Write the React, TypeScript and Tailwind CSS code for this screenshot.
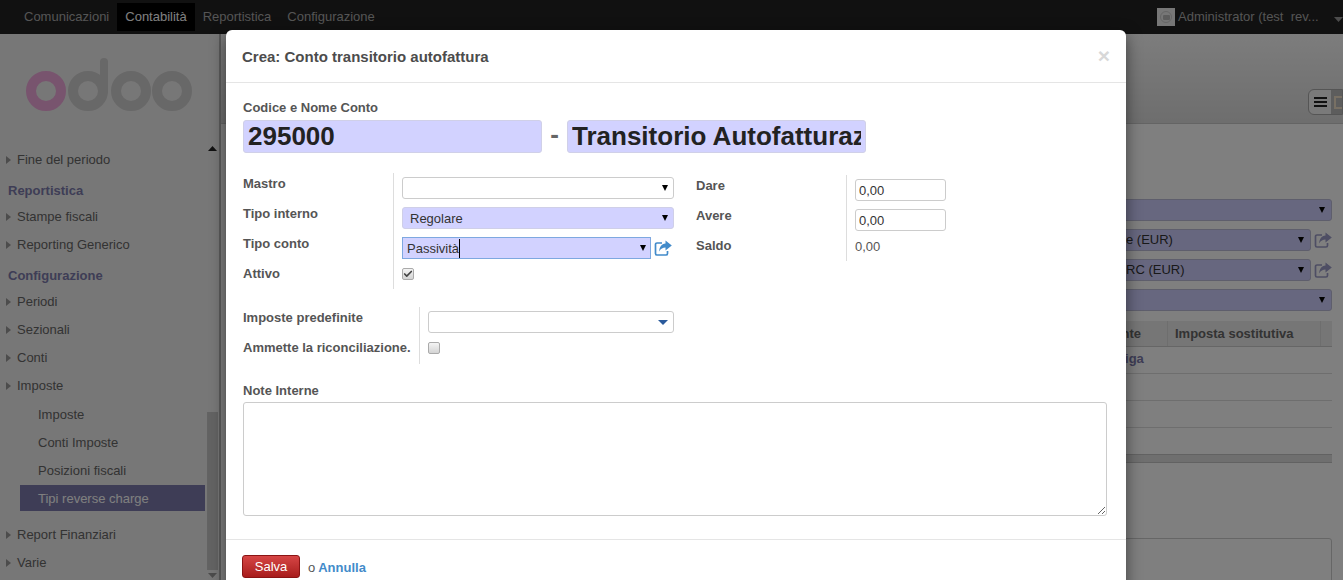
import React from 'react'
import { Check } from 'lucide-react'

const SANS = "font-['Liberation_Sans',Arial,sans-serif]"

const Arrow = ({ color = '#000', wide = false }: { color?: string; wide?: boolean }) =>
  wide ? (
    <svg width="10" height="5" viewBox="0 0 10 5" className="mt-[1px] shrink-0">
      <polygon points="0,0 10,0 5,5" fill={color} />
    </svg>
  ) : (
    <svg width="6" height="6" viewBox="0 0 6 6" className="shrink-0">
      <polygon points="0,0 6,0 3,6" fill={color} />
    </svg>
  )

// share-square icon, the package versions have an outlined arrow
const ShareIcon = ({ color }: { color: string }) => (
  <svg width="18" height="16" viewBox="0 0 18 16" className="shrink-0">
    <path d="M8 3H3a1.5 1.5 0 0 0-1.5 1.5v9A1.5 1.5 0 0 0 3 15h9a1.5 1.5 0 0 0 1.5-1.5V11" fill="none" stroke={color} strokeWidth="1.7" />
    <path d="M11.5 0.5L17.8 5.5L11.5 10.5V7.6C8.8 7.6 6.8 8.6 5.2 11.6C5.2 7 7.6 3.6 11.5 3.4Z" fill={color} />
  </svg>
)

const SideItem = ({ label }: { label: string }) => (
  <div className="flex h-7 items-center pl-[6px] text-[13px] text-[#666]">
    <svg width="5" height="8" viewBox="0 0 5 8" className="mr-[6px] shrink-0">
      <polygon points="0,0 5,4 0,8" fill="#999" />
    </svg>
    {label}
  </div>
)

const SubItem = ({ label, active = false }: { label: string; active?: boolean }) => (
  <div
    className={
      active
        ? 'ml-5 flex h-[26px] items-center bg-[#7c7bad] pl-[18px] pt-px text-[13px] text-white'
        : 'ml-5 flex h-7 items-center pl-[18px] text-[13px] text-[#666]'
    }
  >
    {label}
  </div>
)

const Heading = ({ label }: { label: string }) => (
  <div className="flex h-[29px] items-end pb-[3px] pl-2 text-[13px] font-bold text-[#7c7bad]">{label}</div>
)

const Sidebar = () => (
  <aside className="flex w-[221px] shrink-0 border-r-2 border-[#b4b4b4] bg-[#efeeee]">
    <div className="w-[205px] shrink-0">
      <div className="h-[112px] pl-[25px] pt-[23px]">
        <svg width="170" height="56" viewBox="0 0 170 56" fill="none" strokeWidth="10">
          <circle cx="21" cy="34" r="15" stroke="#f0a8dc" />
          <circle cx="63" cy="34" r="15" stroke="#d0d0d0" />
          <path d="M79 34V5" stroke="#d0d0d0" strokeWidth="8" strokeLinecap="round" />
          <circle cx="106" cy="34" r="15" stroke="#d0d0d0" />
          <circle cx="147" cy="34" r="15" stroke="#d0d0d0" />
        </svg>
      </div>
      <SideItem label="Fine del periodo" />
      <Heading label="Reportistica" />
      <SideItem label="Stampe fiscali" />
      <SideItem label="Reporting Generico" />
      <Heading label="Configurazione" />
      <SideItem label="Periodi" />
      <SideItem label="Sezionali" />
      <SideItem label="Conti" />
      <SideItem label="Imposte" />
      <div className="pt-px">
        <SubItem label="Imposte" />
        <SubItem label="Conti Imposte" />
        <SubItem label="Posizioni fiscali" />
        <SubItem label="Tipi reverse charge" active />
      </div>
      <div className="pt-[10px]">
        <SideItem label="Report Finanziari" />
        <SideItem label="Varie" />
      </div>
    </div>
    <div className="relative w-[14px]">
      <svg width="9" height="5" viewBox="0 0 9 5" className="absolute left-[3px] top-[112px]">
        <polygon points="0,5 9,5 4.5,0" fill="#222" />
      </svg>
      <div className="absolute bottom-[10px] left-[2px] top-[378px] w-[11px] bg-[#c6c6c6]" />
      <svg width="9" height="5" viewBox="0 0 9 5" className="absolute bottom-[2px] left-[3px]">
        <polygon points="0,0 9,0 4.5,5" fill="#999" />
      </svg>
    </div>
  </aside>
)

const BackSelect = ({ label }: { label?: string }) => (
  <div className="flex items-center gap-[3px]">
    <div className="flex h-[22px] flex-1 items-center rounded-[3px] border border-[#bcbcd8] bg-[#cfcfff] pr-[6px] text-[13px] text-[#333]">
      {label && <span className="ml-[82px]">{label}</span>}
      <span className="ml-auto">
        <Arrow />
      </span>
    </div>
    {label && <ShareIcon color="#9c9cc8" />}
  </div>
)

const MainBackground = () => (
  <main className="flex min-w-0 flex-1 flex-col bg-white">
    <div className="flex h-[90px] shrink-0 items-end justify-end border-b border-[#c8c8c8] bg-gradient-to-b from-[#fafafa] to-[#dcdcdc] pb-[8px]">
      <div className="flex h-[26px] w-[35px] items-center overflow-hidden rounded-l-[6px] border border-[#aaa] bg-[#f4f4f4]">
        <div className="flex w-[24px] justify-center">
          <svg width="13" height="10" viewBox="0 0 13 10">
            <path d="M0 1H13M0 5H13M0 9H13" stroke="#222" strokeWidth="2" />
          </svg>
        </div>
        <div className="flex h-full flex-1 items-center bg-[#bbb] pl-[3px]">
          <div className="h-[13px] w-[8px] border-2 border-r-0 border-[#f0e0c8]" />
        </div>
      </div>
    </div>
    <div className="ml-auto flex w-[300px] flex-col gap-2 pr-[11px] pt-[75px]">
      <BackSelect />
      <BackSelect label="e (EUR)" />
      <BackSelect label="RC (EUR)" />
      <BackSelect />
    </div>
    <div className="ml-auto mr-[11px] mt-[10px] w-[300px]">
      <div className="flex h-[26px] items-center border-b border-[#ccc] bg-[#ececec] text-[13px] font-bold text-[#666]">
        <div className="flex h-full w-[136px] items-center justify-end border-r border-[#ddd] pr-[26px]">nte</div>
        <div className="flex h-full w-[153px] items-center border-r border-[#ddd] pl-[7px]">Imposta sostitutiva</div>
      </div>
      <div className="flex h-[27px] items-center justify-start border-b border-[#ddd] pb-[2px] pl-[88px] text-[13px] font-bold text-[#7c7bad]">riga</div>
      <div className="h-[27px] border-b border-[#ddd]" />
      <div className="h-[27px] border-b border-[#ddd]" />
      <div className="h-[26px]" />
      <div className="h-[9px] border-y border-[#c4c4c4] bg-[#dedede]" />
      <div className="mt-[75px] h-[60px] rounded-t-[3px] border border-[#ccc]" />
    </div>
  </main>
)

const TopBar = () => (
  <header className="flex h-[34px] shrink-0 items-center bg-[#222] text-[13px] text-[#aaa]">
    <nav className="flex h-full items-center pl-4">
      <span className="px-2">Comunicazioni</span>
      <span className="flex h-7 items-center bg-black px-2 text-white">Contabilità</span>
      <span className="px-2">Reportistica</span>
      <span className="px-2">Configurazione</span>
    </nav>
    <div className="ml-auto flex items-center">
      <div className="flex h-[18px] w-[18px] items-center justify-center bg-[#eee]">
        <div className="flex h-[12px] w-[12px] items-center justify-center rounded-full border border-[#ccc]">
          <div className="h-[5px] w-[7px] rounded-[1px] bg-[#bbb]" />
        </div>
      </div>
      <span className="ml-[3px] w-[156px] whitespace-pre">Administrator (test  rev...</span>
      <svg width="9" height="5" viewBox="0 0 9 5" className="mt-1">
        <polygon points="0,0 9,0 4.5,5" fill="#999" />
      </svg>
    </div>
  </header>
)

const FieldLabel = ({ children, h = 'h-[30px]' }: { children: React.ReactNode; h?: string }) => (
  <div className={`${h} whitespace-nowrap pt-[3px] text-[13px] font-bold leading-[15px] text-[#555]`}>{children}</div>
)

const Select = ({ value, fill = false, focus = false, wide = false, arrow = '#000' }: { value?: string; fill?: boolean; focus?: boolean; wide?: boolean; arrow?: string }) => (
  <div
    className={
      'flex h-[22px] flex-1 items-center justify-between border text-[13px] text-[#333] ' +
      (focus
        ? 'border-[#7ea8e0] bg-[#d2d2ff] pl-[4px] pr-[4px]'
        : 'rounded-[3px] pl-[7px] pr-[5px] ' + (fill ? 'border-[#cfcfe8] bg-[#d2d2ff]' : 'border-[#ccc] bg-white'))
    }
  >
    <span className={focus ? 'mt-px border-r border-black' : 'mt-px'}>{value}</span>
    <Arrow color={arrow} wide={wide} />
  </div>
)

const Amount = () => (
  <input
    readOnly
    value="0,00"
    className="h-[22px] w-[91px] rounded-[3px] border border-[#ccc] bg-white px-[3px] text-[13px] text-[#333] outline-none"
  />
)

const Checkbox = ({ checked = false }: { checked?: boolean }) => (
  <div className="flex h-[12px] w-[12px] items-center justify-center rounded-[2px] border border-[#aaa] bg-gradient-to-b from-[#f4f4f4] to-[#d4d4d4]">
    {checked && <Check size={10} strokeWidth={4} className="text-[#444]" />}
  </div>
)

const Modal = () => (
  <div className="absolute left-[226px] top-[30px] flex w-[900px] flex-col rounded-t-[6px] bg-white shadow-[0_5px_15px_rgba(0,0,0,0.5)]">
    <div className="flex h-[53px] items-center justify-between border-b border-[#e5e5e5] px-4 pt-[2px]">
      <h4 className="text-[15px] font-bold text-[#4c4c4c]">Crea: Conto transitorio autofattura</h4>
      <span className="mb-[3px] text-[21px] font-bold leading-none text-[#d8d8d8]">×</span>
    </div>
    <div className="flex flex-col pl-[17px] pr-[18px] pt-[17px]">
      <div className="text-[13px] font-bold leading-[15px] text-[#555]">Codice e Nome Conto</div>
      <div className="mt-[5px] flex items-center">
        <input readOnly value="295000" className="h-[33px] w-[299px] rounded-[3px] border border-[#d0d0e8] bg-[#d2d2ff] px-[4px] text-[26px] font-bold text-[#222] outline-none" />
        <span className="w-[25px] pb-[6px] text-center text-[26px] font-bold leading-none text-[#666]">-</span>
        <input readOnly value="Transitorio Autofatturazione" className="h-[33px] w-[299px] rounded-[3px] border border-[#d0d0e8] bg-[#d2d2ff] px-[4px] text-[26px] font-bold text-[#222] outline-none" />
      </div>

      <div className="mt-[20px] flex">
        <div className="flex w-[431px]">
          <div className="w-[150px] shrink-0">
            <FieldLabel>Mastro</FieldLabel>
            <FieldLabel>Tipo interno</FieldLabel>
            <FieldLabel>Tipo conto</FieldLabel>
            <FieldLabel h="h-[26px]">Attivo</FieldLabel>
          </div>
          <div className="flex flex-1 flex-col gap-2 border-l border-[#ddd] pl-2 pt-[4px]">
            <div className="flex">
              <Select />
            </div>
            <div className="flex">
              <Select value="Regolare" fill />
            </div>
            <div className="flex items-center">
              <Select value="Passività" focus />
              <span className="ml-[3px] mr-[2px]">
                <ShareIcon color="#428bca" />
              </span>
            </div>
            <div className="h-[22px] pt-[1px]">
              <Checkbox checked />
            </div>
          </div>
        </div>
        <div className="ml-[22px] mt-[2px] flex h-[86px] self-start">
          <div className="w-[150px] shrink-0">
            <FieldLabel>Dare</FieldLabel>
            <FieldLabel>Avere</FieldLabel>
            <FieldLabel>Saldo</FieldLabel>
          </div>
          <div className="flex flex-col gap-2 border-l border-[#ddd] pl-2 pt-[4px]">
            <Amount />
            <Amount />
            <div className="text-[13px] leading-[16px] text-[#555]">0,00</div>
          </div>
        </div>
      </div>

      <div className="mt-[18px] flex w-[431px]">
        <div className="w-[176px] shrink-0">
          <FieldLabel>Imposte predefinite</FieldLabel>
          <FieldLabel h="h-[26px]">Ammette la riconciliazione.</FieldLabel>
        </div>
        <div className="flex h-[57px] flex-1 flex-col border-l border-[#ddd] pl-2 pt-[4px]">
          <div className="flex h-[22px]">
            <Select arrow="#2a5a9c" wide />
          </div>
          <div className="mt-[9px]">
            <Checkbox />
          </div>
        </div>
      </div>

      <div className="mt-[19px] text-[13px] font-bold leading-[15px] text-[#555]">Note Interne</div>
      <textarea readOnly className="mt-[4px] h-[114px] w-[864px] rounded-[3px] border border-[#ccc] bg-white outline-none" />
    </div>
    <div className="mt-[23px] border-t border-[#e5e5e5] pl-4 pt-[15px]">
      <div className="flex h-[40px] items-start text-[13px]">
        <button className="h-[23px] w-[58px] rounded-[3px] border border-[#8a1414] bg-gradient-to-b from-[#d64545] to-[#a81c1c] text-white">Salva</button>
        <span className="ml-2 pt-[3px] text-[#555]">o</span>
        <span className="ml-[3px] pt-[3px] font-bold text-[#428bca]">Annulla</span>
      </div>
    </div>
  </div>
)

const App: React.FC = () => {
  return (
    <div className={`relative flex h-[580px] w-[1343px] flex-col overflow-hidden ${SANS}`}>
      <TopBar />
      <div className="flex min-h-0 flex-1">
        <Sidebar />
        <MainBackground />
      </div>
      <div className="absolute inset-0 bg-black/50" />
      <Modal />
    </div>
  )
}

export default App
